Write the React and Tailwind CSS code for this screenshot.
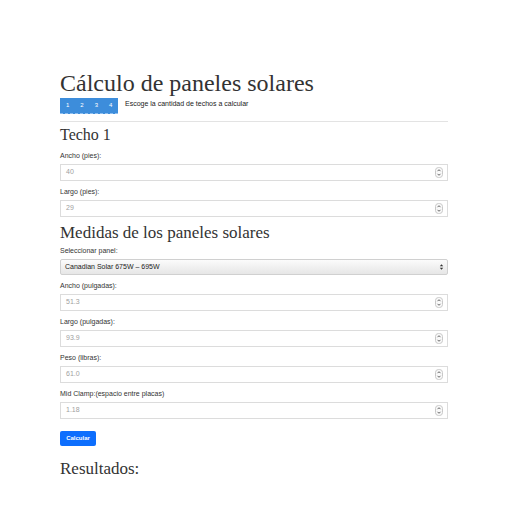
import React from "react";

function Spinner() {
  return (
    <svg width="8" height="11" viewBox="0 0 8 11" className="shrink-0">
      <rect x="0.5" y="0.5" width="7" height="10" rx="3" fill="#fafafa" stroke="#c8c8c8" />
      <path d="M2.5 4.2 L4 2.7 L5.5 4.2" fill="none" stroke="#555" strokeWidth="0.9" />
      <path d="M2.5 6.8 L4 8.3 L5.5 6.8" fill="none" stroke="#555" strokeWidth="0.9" />
    </svg>
  );
}

function Field({ label, value }) {
  return (
    <>
      <div className="mt-[6px] h-[10px] text-[7px] leading-[10px] text-[#333]">{label}</div>
      <div className="mt-[3px] h-[17px] border border-[#dcdcdc] bg-white flex items-center justify-between pl-[5px] pr-[4px]">
        <span className="text-[7px] text-[#a0a0a0]">{value}</span>
        <Spinner />
      </div>
    </>
  );
}

export default function App() {
  return (
    <div className="w-[515px] h-[520px] bg-white overflow-hidden font-['Liberation_Sans',Arial,sans-serif]">
      <div className="ml-[60px] w-[388px] flex flex-col">
        <h1 className="mt-[69px] h-[28px] text-[24px] leading-[28px] text-[#333] font-normal whitespace-nowrap font-['Liberation_Serif','Times_New_Roman',serif]">
          Cálculo de paneles solares
        </h1>
        <div className="mt-[1px] flex items-center gap-[7px]">
          <div className="w-[58px] h-[16px] bg-[#3d8ddb] border-b border-dashed border-[#8fbff0] flex items-center pl-[6px] gap-[11px] text-white text-[6px]">
            <span>1</span><span>2</span><span>3</span><span>4</span>
          </div>
          <span className="text-[7px] text-[#222] -mt-[4px]">
            Escoge la cantidad de techos a calcular
          </span>
        </div>
        <div className="mt-[7px] h-px bg-[#e3e3e3]" />
        <h2 className="mt-[3px] h-[20px] text-[16px] leading-[20px] text-[#333] font-normal font-['Liberation_Serif','Times_New_Roman',serif]">
          Techo 1
        </h2>
        <Field label="Ancho (pies):" value="40" />
        <Field label="Largo (pies):" value="29" />
        <h2 className="mt-[6px] h-[20px] text-[17px] leading-[20px] text-[#333] font-normal whitespace-nowrap font-['Liberation_Serif','Times_New_Roman',serif]">
          Medidas de los paneles solares
        </h2>
        <div className="mt-[3px] h-[10px] text-[7px] leading-[10px] text-[#333]">Seleccionar panel:</div>
        <div className="mt-[3px] h-[16px] border border-[#d0d0d0] rounded-[2px] bg-gradient-to-b from-[#fbfbfb] to-[#e6e6e6] flex items-center justify-between pl-[4px] pr-[3px]">
          <span className="text-[7px] text-[#222]">Canadian Solar 675W – 695W</span>
          <svg width="5" height="8" viewBox="0 0 5 8">
            <path d="M0.8 3.2 L2.5 1.2 L4.2 3.2 Z" fill="#333" />
            <path d="M0.8 4.8 L2.5 6.8 L4.2 4.8 Z" fill="#333" />
          </svg>
        </div>
        <Field label="Ancho (pulgadas):" value="51.3" />
        <Field label="Largo (pulgadas):" value="93.9" />
        <Field label="Peso (libras):" value="61.0" />
        <Field label="Mid Clamp:(espacio entre placas)" value="1.18" />
        <button className="mt-[12px] w-[36px] h-[15px] bg-[#0d6efd] rounded-[2px] text-white text-[6px] font-bold flex items-center justify-center">
          Calcular
        </button>
        <h2 className="mt-[12px] h-[22px] text-[17px] leading-[22px] text-[#333] font-normal font-['Liberation_Serif','Times_New_Roman',serif]">
          Resultados:
        </h2>
      </div>
    </div>
  );
}
